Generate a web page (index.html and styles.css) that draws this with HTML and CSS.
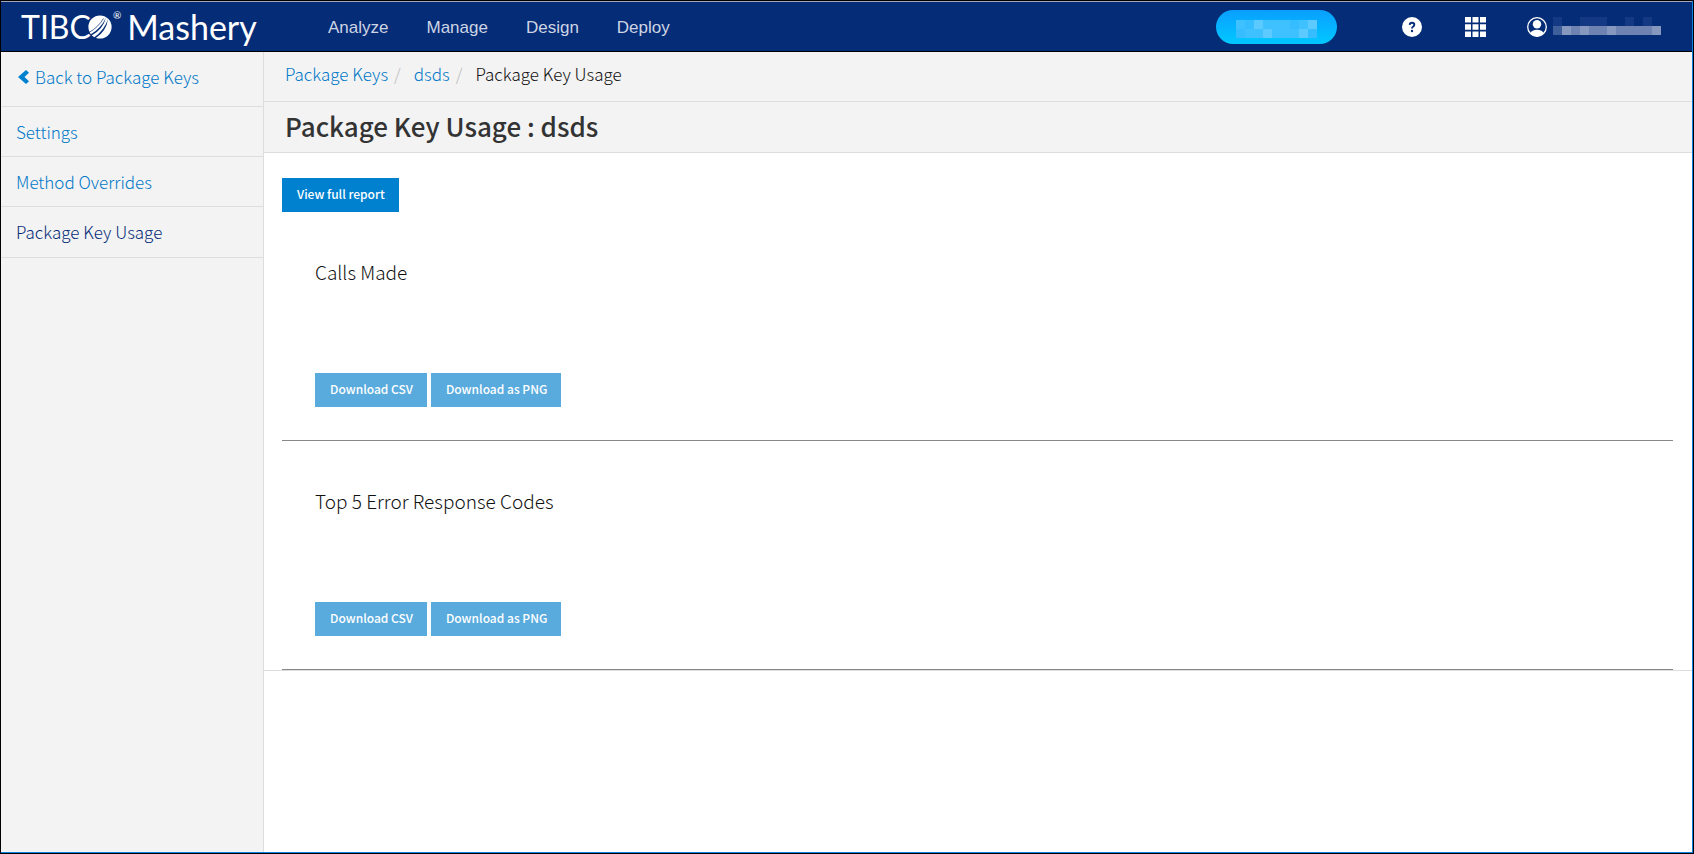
FILE: index.html
```html
<!DOCTYPE html>
<html lang="en">
<head>
<meta charset="utf-8">
<title>Package Key Usage</title>
<link rel="stylesheet" href="styles.css">
</head>
<body>
<div class="window">
  <header class="topbar">
    <a class="brand" href="#">
      <span class="brand-name">TIBC</span>
      <svg class="brand-globe" viewBox="0 0 24 24" aria-hidden="true">
        <circle cx="12" cy="12" r="11.6" fill="#fff"/>
        <path d="M2.500 19.500Q13 13.500 18 2.500Q15 14.500 3.500 20.500zM6 22.500Q16.500 15 20 4Q18.500 16 7.500 23.300z" fill="#052c77"/>
        <path d="M1 17.500Q10.500 12 15.500 3.500" fill="none" stroke="#052c77" stroke-width=".7"/>
      </svg>
      <span class="brand-mark">®</span>
      <span class="brand-name product">Mashery</span>
    </a>
    <nav class="mainnav">
      <a href="#">Analyze</a>
      <a href="#">Manage</a>
      <a href="#">Design</a>
      <a href="#">Deploy</a>
    </nav>
    <div class="tools">
      <button class="pill" aria-label="Account plan">
        <svg viewBox="0 0 81 18" width="81" height="18" aria-hidden="true">
          <path fill="#3fc0ff" d="M0 0h81v18H0z"/>
          <path fill="#5cc9ff" d="M18 0h9v9h-9zM72 0h9v9h-9zM27 9h9v9h-9zM63 9h9v9h-9z"/>
          <path fill="#35bdff" d="M9 0h9v9H9zM54 0h9v9h-9zM0 9h9v9H0zM72 9h9v9h-9z"/>
        </svg>
      </button>
      <button class="icon help" aria-label="Help">
        <svg viewBox="0 0 20 20" width="20" height="20"><circle cx="10" cy="10" r="10" fill="#fff"/><path d="M7.700 7.900Q7.800 5.800 10 5.800Q12.300 5.800 12.300 7.700Q12.300 8.800 11.200 9.500Q10 10.200 10 11.600" fill="none" stroke="#052c77" stroke-width="1.900"/><circle cx="10" cy="14" r="1.200" fill="#052c77"/></svg>
      </button>
      <button class="icon apps" aria-label="Applications">
        <svg viewBox="0 0 21 20" width="21" height="20"><path fill="#fff" d="M0 0h6v5.500H0zM7.500 0h6v5.500h-6zM15 0h6v5.500h-6zM0 7.200h6v5.500H0zM7.500 7.200h6v5.500h-6zM15 7.200h6v5.500h-6zM0 14.500h6V20H0zM7.500 14.500h6V20h-6zM15 14.500h6V20h-6z"/></svg>
      </button>
      <button class="user" aria-label="User account">
        <svg viewBox="0 0 20 20" width="20" height="20"><circle cx="10" cy="10" r="9.300" fill="none" stroke="#fff" stroke-width="1.300"/><circle cx="10" cy="7.300" r="4.200" fill="#fff"/><path d="M3 16.500Q5 12.800 10 12.800T17 16.500Q14 19.500 10 19.500T3 16.500" fill="#fff"/></svg>
        <svg viewBox="0 0 108 18" width="108" height="18" aria-hidden="true">
          <path fill="#6f83b3" d="M0 9h108v9H0z"/>
          <path fill="#143882" d="M0 0h9v9H0zM27 0h27v9H27zM72 0h9v9h-9zM90 0h9v9h-9z"/>
          <path fill="#3f5f9b" d="M0 9h9v9H0z"/>
          <path fill="#8798bf" d="M9 9h9v9H9zM27 9h9v9h-9zM54 9h9v9h-9zM99 9h9v9h-9z"/>
        </svg>
      </button>
    </div>
  </header>
  <div class="body">
    <aside class="sidebar">
      <a class="back" href="#"><svg viewBox="0 0 11 14" width="11" height="14" aria-hidden="true"><path d="M8 0L11 2.700L6.500 7L11 11.300L8 14L0 7z" fill="#0081cf"/></svg>Back to Package Keys</a>
      <a href="#">Settings</a>
      <a href="#">Method Overrides</a>
      <a class="current" href="#">Package Key Usage</a>
    </aside>
    <main class="main">
      <nav class="crumbs">
        <a href="#">Package Keys</a><span class="slash">/</span>
        <a href="#">dsds</a><span class="slash">/</span>
        <span>Package Key Usage</span>
      </nav>
      <h1 class="title">Package Key Usage : dsds</h1>
      <div class="content">
        <button class="btn">View full report</button>
        <section class="report">
          <h2>Calls Made</h2>
          <div class="actions"><button class="btn soft">Download CSV</button><button class="btn soft">Download as PNG</button></div>
        </section>
        <section class="report">
          <h2>Top 5 Error Response Codes</h2>
          <div class="actions"><button class="btn soft">Download CSV</button><button class="btn soft">Download as PNG</button></div>
        </section>
      </div>
    </main>
  </div>
</div>
</body>
</html>
```
FILE: styles.css
```css
* { box-sizing: border-box; }
body {
  display: flex;
  flex-direction: column;
  min-height: 100vh;
  margin: 0;
  padding: 1px;
  background: #000;
  font-family: "Noto Sans CJK SC", "Open Sans", sans-serif;
  font-size: 17px;
  font-weight: 300;
  color: #111;
}
a { color: #0078c8; text-decoration: none; }
button { display: block; border: 0; padding: 0; background: none; font: inherit; cursor: pointer; }
svg { display: block; flex: none; }

.window {
  display: flex;
  flex: 1;
  flex-direction: column;
  border: solid #0a84e0;
  border-width: 0 1px 1px 0;
  background: #fff;
}

.topbar {
  display: flex;
  align-items: center;
  height: 51px;
  padding: 0 31px 0 20px;
  background: #052c77;
  border-top: 1px solid #a5a5b5;
  border-bottom: 1px solid #000;
}
.brand { display: flex; align-items: center; width: 307px; color: #fff; }
.brand-name { font: 32px/40px Lato, sans-serif; }
.product { font-size: 34px; }
.brand-globe { width: 24px; height: 24px; margin-left: -3px; }
.brand-mark { align-self: flex-start; margin: 0 6px 0 1px; font: 10px/16px Lato, sans-serif; }
.mainnav { display: flex; gap: 38px; padding-top: 2px; font: 17px/24px "Liberation Sans", Arial, sans-serif; }
.mainnav a { color: #cdd5e4; }
.tools { display: flex; align-items: center; margin-left: auto; }
.pill {
  display: flex;
  align-items: center;
  justify-content: center;
  width: 121px;
  height: 34px;
  margin-right: 65px;
  padding-top: 4px;
  border-radius: 17px;
  background: linear-gradient(#0a9fff, #00c8ff);
}
.help { margin-right: 43px; }
.apps { margin-right: 41px; }
.user { display: flex; align-items: flex-start; gap: 6px; }

.body { display: flex; flex: 1; }
.sidebar { flex: none; width: 263px; background: #f3f3f3; border-right: 1px solid #ddd; }
.sidebar a {
  display: flex;
  align-items: center;
  height: 50px;
  padding: 0 15px;
  border-bottom: 1px solid #ddd;
}
.sidebar .back { gap: 6px; height: 55px; padding: 0 17px 5px; }
.sidebar .current { height: 51px; padding-bottom: 2px; color: #052c77; }

.main { flex: 1; }
.crumbs {
  display: flex;
  align-items: center;
  height: 50px;
  padding: 0 21px 6px;
  background: #f3f3f3;
  border-bottom: 1px solid #ddd;
}
.slash { margin: 0 13px 0 6px; color: #bbb; }
.title {
  margin: 0;
  padding: 0 21px 2px;
  background: #f3f3f3;
  border-bottom: 1px solid #ddd;
  font-size: 26px;
  font-weight: 500;
  line-height: 48px;
  color: #333;
}
.content { padding: 25px 19px 0 18px; border-bottom: 1px solid #ddd; }
.btn {
  height: 34px;
  padding: 0 14px 2px 15px;
  background: #0081cf;
  color: #fff;
  font-size: 12px;
  font-weight: 500;
  line-height: 32px;
}
.soft { background: #59abdd; }
.report { padding: 45px 33px 33px; border-bottom: 1px solid #888; }
.report h2 { margin: 0; font-size: 19px; font-weight: 300; line-height: 30px; }
.actions { display: flex; gap: 4px; margin-top: 86px; }
```
